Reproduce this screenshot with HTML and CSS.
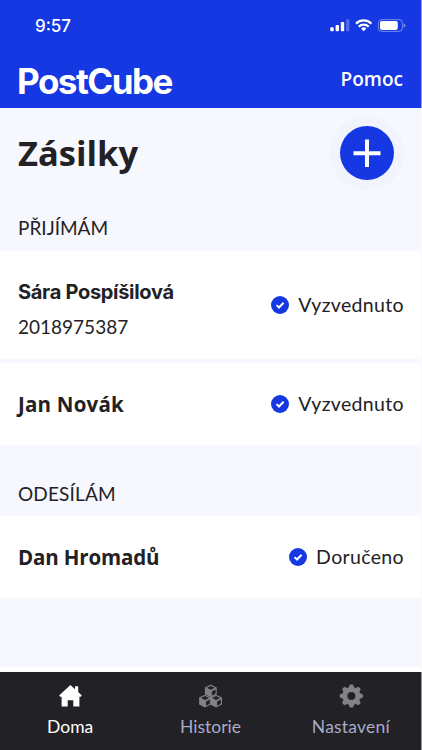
FILE: index.html
```
<!DOCTYPE html>
<html lang="cs">
<head>
    <meta charset="UTF-8">
    <meta name="viewport" content="width=device-width, initial-scale=1.0">
    <title>PostCube</title>
    <link rel="stylesheet" href="styles.css">
</head>
<body>
    <div class="app">
        <header class="header">
            <div class="status-bar">
                <span class="time">9:57</span>
                <svg class="status-icons" width="76" height="14" viewBox="0 0 76 14">
                    <g fill="#ffffff">
                        <rect x="0.3" y="8.2" width="3.4" height="4" rx="0.9"/>
                        <rect x="5.6" y="6" width="3.4" height="6.2" rx="0.9"/>
                        <rect x="10.8" y="3" width="3.4" height="9.2" rx="0.9"/>
                        <rect x="16" y="0.3" width="3.4" height="11.9" rx="0.9" opacity="0.25"/>
                    </g>
                    <g fill="none" stroke="#ffffff" stroke-width="2.2">
                        <path d="M26 4.6 A11 11 0 0 1 41.4 4.6"/>
                        <path d="M28.7 7.7 A7 7 0 0 1 38.7 7.7"/>
                    </g>
                    <path d="M33.7 12.3 L31 9.6 A4 4 0 0 1 36.4 9.6 Z" fill="#ffffff"/>
                    <rect x="48.4" y="0.6" width="24" height="11.8" rx="3.4" fill="none" stroke="#ffffff" stroke-opacity="0.4"/>
                    <rect x="50" y="2.1" width="17.8" height="8.8" rx="1.8" fill="#ffffff"/>
                    <path d="M73.8 4.5 Q75.4 5.1 75.4 6.5 Q75.4 7.9 73.8 8.5 Z" fill="#ffffff" opacity="0.5"/>
                </svg>
            </div>
            <div class="nav-bar">
                <div class="logo">PostCube</div>
                <a class="help">Pomoc</a>
            </div>
        </header>

        <main class="content">
            <div class="title-row">
                <h1 class="title">Zásilky</h1>
                <button class="add-button" aria-label="Přidat">
                    <svg width="54" height="54" viewBox="0 0 54 54">
                        <path d="M27 13.5V41M13.5 27.2H40.5" stroke="#ffffff" stroke-width="4" fill="none"/>
                    </svg>
                </button>
            </div>

            <h2 class="section-label receiving">PŘIJÍMÁM</h2>
            <div class="parcel parcel-tall">
                <div class="person">
                    <div class="name name-sara">Sára Pospíšilová</div>
                    <div class="number">2018975387</div>
                </div>
                <div class="status">
                    <svg class="check" width="18" height="18" viewBox="0 0 18 18">
                        <circle cx="9" cy="9" r="9" fill="#1638e2"/>
                        <path d="M5.5 9.1L8 11.5L12.6 6.7" stroke="#ffffff" stroke-width="2" fill="none"/>
                    </svg>
                    <span class="status-text">Vyzvednuto</span>
                </div>
            </div>
            <div class="parcel">
                <div class="name name-jan">Jan Novák</div>
                <div class="status">
                    <svg class="check" width="18" height="18" viewBox="0 0 18 18">
                        <circle cx="9" cy="9" r="9" fill="#1638e2"/>
                        <path d="M5.5 9.1L8 11.5L12.6 6.7" stroke="#ffffff" stroke-width="2" fill="none"/>
                    </svg>
                    <span class="status-text">Vyzvednuto</span>
                </div>
            </div>

            <h2 class="section-label sending">ODESÍLÁM</h2>
            <div class="parcel">
                <div class="name name-dan">Dan Hromadů</div>
                <div class="status">
                    <svg class="check" width="18" height="18" viewBox="0 0 18 18">
                        <circle cx="9" cy="9" r="9" fill="#1638e2"/>
                        <path d="M5.5 9.1L8 11.5L12.6 6.7" stroke="#ffffff" stroke-width="2" fill="none"/>
                    </svg>
                    <span class="status-text">Doručeno</span>
                </div>
            </div>
        </main>

        <nav class="tabs">
            <a class="tab active">
                <svg width="24" height="24" viewBox="0 0 24 24">
                    <path d="M12.4 1L17 5.2V2.2H20.2V8.1L23.8 11.6L22.8 12.8H21.4V22.5H15.3V16.2H9.7V22.5H3.6V12.8H2.1L1.1 11.6Z" fill="#ffffff"/>
                </svg>
                <span>Doma</span>
            </a>
            <a class="tab">
                <svg width="24" height="24" viewBox="0 0 24 24">
                    <defs>
                        <g id="cube">
                            <path d="M0 -6.3L5.9 -3.4V3.4L0 6.4L-5.9 3.4V-3.4Z" fill="#818188"/>
                            <path d="M0 -5L4 -3.1L0 -1.1L-4 -3.1Z" fill="#222126"/>
                            <path d="M1 .5L4.8 -1.4V2.7L1 4.7Z" fill="#222126"/>
                        </g>
                    </defs>
                    <use href="#cube" x="12.8" y="6.9"/>
                    <use href="#cube" x="7" y="17"/>
                    <use href="#cube" x="18.1" y="17"/>
                </svg>
                <span>Historie</span>
            </a>
            <a class="tab">
                <svg width="24" height="24" viewBox="0 0 24 24">
                    <g fill="#818188" transform="translate(0.4 0)">
                        <path fill-rule="evenodd" d="M12 3A9 9 0 1 1 12 21A9 9 0 1 1 12 3ZM12 8A4 4 0 1 0 12 16A4 4 0 1 0 12 8Z"/>
                        <path id="tooth" d="M9 4L10.4 .4H13.6L15 4Z"/>
                        <use href="#tooth" transform="rotate(45 12 12)"/>
                        <use href="#tooth" transform="rotate(90 12 12)"/>
                        <use href="#tooth" transform="rotate(135 12 12)"/>
                        <use href="#tooth" transform="rotate(180 12 12)"/>
                        <use href="#tooth" transform="rotate(225 12 12)"/>
                        <use href="#tooth" transform="rotate(270 12 12)"/>
                        <use href="#tooth" transform="rotate(315 12 12)"/>
                    </g>
                </svg>
                <span class="tab-settings">Nastavení</span>
            </a>
        </nav>
    </div>
</body>
</html>
```
FILE: styles.css
```
* {
    box-sizing: border-box;
}

body {
    margin: 0;
    background-color: #f7f8fe;
    font-family: Lato, "Liberation Sans", sans-serif;
    color: #222126;
}

.app {
    width: 422px;
    height: 750px;
    display: flex;
    flex-direction: column;
    white-space: nowrap;
}

.header {
    height: 108px;
    background-color: #1638e2;
    border-right: 1px solid #8f9ef2;
    color: #ffffff;
}

.status-bar {
    height: 52px;
    padding: 0 15px 0 35px;
    display: flex;
    align-items: center;
    justify-content: space-between;
}

.time {
    font-family: Inter, sans-serif;
    font-size: 17px;
    font-weight: 500;
}

.nav-bar {
    height: 56px;
    padding: 0 18px 0 17px;
    display: flex;
    align-items: center;
    justify-content: space-between;
}

.logo {
    font-family: Inter, sans-serif;
    font-size: 35px;
    line-height: 56px;
    font-weight: 700;
    letter-spacing: -1.5px;
    padding-top: 2px;
}

.help {
    font-family: "Open Sans", sans-serif;
    font-size: 19px;
    font-weight: 600;
    padding-bottom: 3px;
}

.content {
    flex: 1;
    background-color: #f7f8fe;
    border-right: 1px solid #fafafd;
    border-bottom: 5px solid #ffffff;
}

.title-row {
    height: 90px;
    padding: 0 27px 0 18px;
    display: flex;
    align-items: center;
    justify-content: space-between;
}

.title {
    margin: 0;
    padding-bottom: 2px;
    font-family: "Open Sans", sans-serif;
    font-size: 34.5px;
    font-weight: 700;
}

.add-button {
    width: 54px;
    height: 54px;
    padding: 0;
    border: none;
    border-radius: 50%;
    background-color: #1638e2;
    box-shadow: 0 0 0 10px #f1f3fd;
}

.add-button svg {
    display: block;
}

.section-label {
    margin: 0;
    padding-left: 18px;
    font-size: 19px;
    font-weight: 400;
}

.receiving {
    height: 53px;
    line-height: 60px;
}

.sending {
    height: 71px;
    line-height: 97px;
    letter-spacing: 0.15px;
}

.parcel {
    height: 82px;
    padding: 0 17px 0 18px;
    background-color: #ffffff;
    display: flex;
    align-items: center;
    justify-content: space-between;
}

.parcel-tall {
    height: 108px;
    margin-bottom: 4px;
}

.person {
    padding-top: 9px;
}

.name {
    font-family: "Open Sans", sans-serif;
    font-size: 20.5px;
    line-height: 26px;
    font-weight: 700;
}

.name-sara {
    font-family: Inter, sans-serif;
    font-size: 20px;
    letter-spacing: -0.3px;
}

.name-jan {
    letter-spacing: 0.2px;
}

.name-dan {
    letter-spacing: -0.15px;
}

.number {
    margin-top: 9px;
    font-size: 19px;
    line-height: 26px;
}

.status {
    display: flex;
    align-items: center;
    gap: 9px;
}

.status-text {
    font-size: 19.5px;
    line-height: 26px;
    letter-spacing: 0.35px;
}

.tabs {
    height: 78px;
    background-color: #222126;
    border-right: 1px solid #9a9a9f;
    display: grid;
    grid-template-columns: repeat(3, 1fr);
    color: #a9abc9;
}

.tab {
    padding-top: 12px;
    display: flex;
    flex-direction: column;
    align-items: center;
    gap: 7px;
    font-size: 17.5px;
    line-height: 23px;
}

.tab-settings {
    letter-spacing: 0.2px;
}

.active {
    color: #ffffff;
}
```
